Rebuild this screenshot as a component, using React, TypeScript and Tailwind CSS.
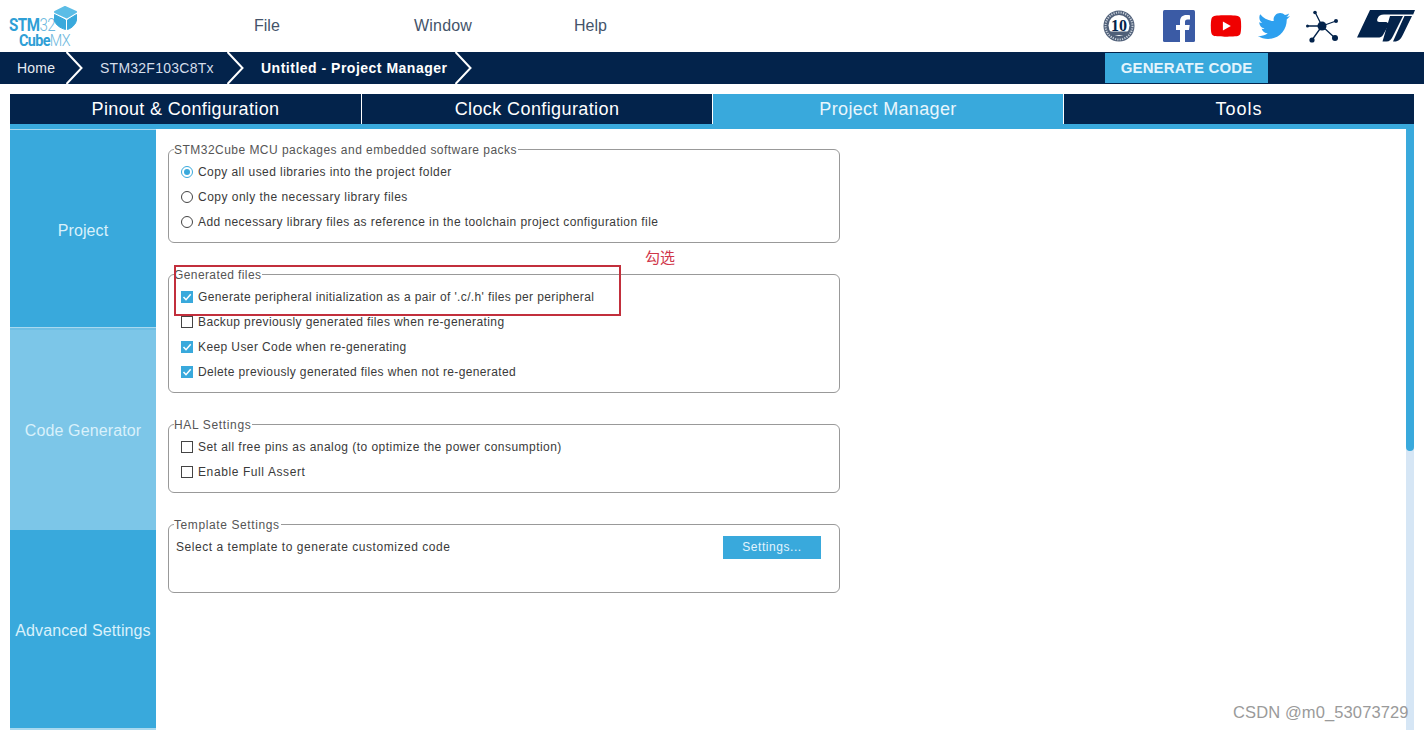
import React from "react";
import { FaYoutube, FaTwitter } from "react-icons/fa";

const sans = "font-['Liberation_Sans',Arial,sans-serif]";

function Cube() {
  return (
    <svg width="25" height="25" viewBox="0 0 25 25" strokeLinejoin="round">
      <path d="M2 6 L12 1 L23 6 L14 11.5 Z" fill="#5cbde6" stroke="#5cbde6" strokeWidth="2" />
      <path d="M1.5 8.5 L12.5 14 L12.5 23.5 C7 22 3 19 1.5 15 Z" fill="#39a9dc" stroke="#39a9dc" />
      <path d="M23.5 8.5 L14.5 14 L14.5 23.5 C19 22 23 18 23.5 14 Z" fill="#39a9dc" stroke="#39a9dc" />
    </svg>
  );
}

function Badge() {
  return (
    <svg width="32" height="32" viewBox="0 0 32 32">
      <circle cx="16" cy="16" r="15.5" fill="#4f5f78" />
      <circle cx="16" cy="16" r="13.5" fill="none" stroke="#c8d0da" strokeDasharray="1.2 1.2" strokeWidth="2" />
      <circle cx="16" cy="15.5" r="10.5" fill="#fff" />
      <text x="16" y="20.5" textAnchor="middle" fontSize="16" fontWeight="700" fontFamily="Liberation Serif" fill="#03234b">10</text>
      <path d="M6 21.5 H26 L24 25 H8 Z" fill="#4f5f78" />
    </svg>
  );
}

function Facebook() {
  return (
    <svg width="32" height="32" viewBox="0 0 32 32">
      <rect width="32" height="32" rx="1.5" fill="#3b5ba5" />
      <path d="M22 32 V20 H26 L26.7 15 H22 V12 C22 10.5 22.5 9.6 24.5 9.6 H27 V5.2 C26.4 5.1 25 5 23.3 5 C19.7 5 17 7.2 17 11.4 V15 H13 V20 H17 V32 Z" fill="#fff" />
    </svg>
  );
}

function Network() {
  return (
    <svg width="33" height="33" viewBox="0 0 33 33" fill="#03234b" stroke="#03234b">
      <path d="M16 16 L9 2 M16 16 L30 11 M16 16 L29 28 M16 16 L6 30 M16 16 L1 16" strokeWidth="1.3" />
      <circle cx="16" cy="16" r="4.5" stroke="none" />
      <circle cx="9" cy="2.5" r="1.8" stroke="none" />
      <circle cx="30" cy="11" r="2" stroke="none" />
      <circle cx="29" cy="28" r="3" stroke="none" />
      <circle cx="6" cy="30" r="2.6" stroke="none" />
      <circle cx="1.5" cy="16" r="1.5" stroke="none" />
    </svg>
  );
}

function StLogo() {
  return (
    <svg width="58" height="32" viewBox="0 0 58 32">
      <path d="M13 0 H58 L56.2 4.5 H27 C23.5 4.5 21.5 6 20.5 8.5 C19.5 11 20.5 12 22.5 12 H28 C31 12 32 14 31 16 L26 25 C25 27 23 27.5 21 27.5 H0 Z" fill="#03234b" />
      <path d="M33 6 H46 L36 26 C34.5 29.5 32.5 31.5 29.5 31.5 H25.5 Z" fill="#03234b" />
      <path d="M47.5 6 H55 L46 24.5 C44 29 41.5 31.5 37.5 31.5 H36 Z" fill="#03234b" />
    </svg>
  );
}

function Chevron() {
  return (
    <svg width="18" height="32" viewBox="0 0 18 32" className="shrink-0">
      <path d="M0.5 0 L15.5 16 L0.5 32" fill="none" stroke="#fff" strokeWidth="2" />
    </svg>
  );
}

function Radio({ on, label, className }: { on?: boolean; label: string; className?: string }) {
  return (
    <div className="flex h-[25px] items-center">
      <span className={`flex h-[12px] w-[12px] items-center justify-center rounded-full border ${on ? "border-[#39a9dc]" : "border-[#444]"}`}>
        {on && <span className="h-[6px] w-[6px] rounded-full bg-[#39a9dc]" />}
      </span>
      <span className={`ml-[5px] ${className ?? ""}`}>{label}</span>
    </div>
  );
}

function Check({ on, label, className }: { on?: boolean; label: string; className?: string }) {
  return (
    <div className="flex h-[25px] items-center">
      {on ? (
        <svg width="12" height="12" viewBox="0 0 12 12">
          <rect width="12" height="12" fill="#39a9dc" />
          <path d="M2.5 6 L5 8.7 L9.7 3.3" fill="none" stroke="#fff" strokeWidth="1.5" />
        </svg>
      ) : (
        <span className="h-[12px] w-[12px] border border-[#444]" />
      )}
      <span className={`ml-[5px] ${className ?? ""}`}>{label}</span>
    </div>
  );
}

function Group({ title, height, className, legendClass, children }: { title: string; height: string; className?: string; legendClass?: string; children: React.ReactNode }) {
  return (
    <fieldset className={`w-[672px] rounded-[6px] border border-[#999] pl-[12px] pt-[2px] ${height} ${className ?? ""}`}>
      <legend className={`-ml-[7px] pr-[1px] pt-[2px] text-[12px] leading-[14px] text-[#555] ${legendClass ?? "tracking-[0.47px]"}`}>{title}</legend>
      {children}
    </fieldset>
  );
}

export default function App() {
  const tabs = [
    { label: "Pinout & Configuration", track: "tracking-[0.35px]" },
    { label: "Clock Configuration", track: "tracking-[0.4px]" },
    { label: "Project Manager", track: "tracking-[0.35px]" },
    { label: "Tools", track: "tracking-[1px]" },
  ];
  return (
    <div className={`relative h-[730px] w-[1424px] overflow-hidden bg-white ${sans}`}>
      <header className="flex h-[52px] items-center bg-white">
        <div className="relative h-[52px] w-[254px] shrink-0">
          <div className="absolute left-[9px] top-[18px] origin-left scale-x-[0.84] font-['Roboto',sans-serif] text-[18px] leading-[14px] tracking-[-0.6px] text-[#2f9fd6]">
            <b>STM</b><span className="font-light text-[#6db8de]">32</span>
          </div>
          <div className="absolute left-[19px] top-[33px] origin-left scale-x-[0.9] font-['Roboto',sans-serif] text-[16px] leading-[15px] tracking-[-0.7px] text-[#6db8de]">
            <b className="text-[#2f9fd6]">Cube</b><span className="font-light">MX</span>
          </div>
          <div className="absolute left-[53px] top-[6px]"><Cube /></div>
        </div>
        <nav className="flex text-[16px] text-[#44546a]">
          <span className="w-[160px]">File</span>
          <span className="w-[160px] tracking-[0.2px]">Window</span>
          <span>Help</span>
        </nav>
        <div className="ml-auto flex items-center pr-[9px]">
          <span className="mr-[28px]"><Badge /></span>
          <span className="mr-[15px]"><Facebook /></span>
          <FaYoutube className="mr-[16px] h-[32px] w-[32px] text-[#f00000]" />
          <FaTwitter className="mr-[16px] h-[32px] w-[32px] text-[#2da0ef]" />
          <span className="mr-[18px]"><Network /></span>
          <StLogo />
        </div>
      </header>

      <div className="flex h-[32px] items-center bg-[#03234b] text-[14px] text-white">
        <span className="ml-[17px] w-[49px] tracking-[0.2px] text-[#e6ebf2]">Home</span>
        <Chevron />
        <span className="ml-[16px] w-[127px] tracking-[0.25px] text-[#d5deea]">STM32F103C8Tx</span>
        <Chevron />
        <span className="ml-[16px] w-[194px] font-bold tracking-[0.5px]">Untitled - Project Manager</span>
        <Chevron />
        <button className="ml-[632px] h-[30px] w-[163px] bg-[#39a9dc] text-[15px] font-bold tracking-[0.15px] text-[#e3f4fc]">
          GENERATE CODE
        </button>
      </div>

      <div className="mx-[10px] mt-[10px]">
        <div className="flex h-[30px]">
          {tabs.map((t, i) => (
            <div
              key={t.label}
              className={`flex w-[351px] items-center justify-center pt-[1px] text-[18px] ${t.track} ${i > 0 ? "border-l border-white" : ""} ${i === 2 ? "bg-[#39a9dc] text-[#e8f6fc]" : "bg-[#03234b] text-white"}`}
            >
              {t.label}
            </div>
          ))}
        </div>
        <div className="h-[5px] bg-[#39a9dc]" />
        <div className="h-[1px] w-[146px] bg-[#a9d9ef]" />
        <div className="flex h-[600px]">
          <aside className="flex w-[146px] shrink-0 flex-col text-[16px] tracking-[0.12px] text-[#d9f1fb]">
            <div className="flex h-[197px] items-center justify-center bg-[#39a9dc] pt-[4px]">Project</div>
            <div className="h-[1px] bg-[#a9d9ef]" />
            <div className="h-[2px] bg-[#6fbfe4]" />
            <div className="flex h-[200px] items-center justify-center bg-[#7cc6e8] pt-[2px]">Code Generator</div>
            <div className="flex h-[198px] items-center justify-center bg-[#39a9dc] pt-[4px]">Advanced Settings</div>
            <div className="h-[2px] bg-[#a9d9ef]" />
          </aside>
          <main className="flex-1 pl-[12px] pt-[11px] text-[12px] tracking-[0.43px] text-[#3a3a3a]">
            <Group title="STM32Cube MCU packages and embedded software packs" height="h-[102px]">
              <Radio on label="Copy all used libraries into the project folder" />
              <Radio label="Copy only the necessary library files" className="tracking-[0.48px]" />
              <Radio label="Add necessary library files as reference in the toolchain project configuration file" />
            </Group>
            <Group title="Generated files" height="h-[127px]" className="mt-[23px]" legendClass="tracking-[0.4px]">
              <Check on label="Generate peripheral initialization as a pair of '.c/.h' files per peripheral" className="tracking-[0.38px]" />
              <Check label="Backup previously generated files when re-generating" className="tracking-[0.39px]" />
              <Check on label="Keep User Code when re-generating" className="tracking-[0.4px]" />
              <Check on label="Delete previously generated files when not re-generated" className="tracking-[0.36px]" />
            </Group>
            <Group title="HAL Settings" height="h-[77px]" className="mt-[23px]" legendClass="tracking-[0.65px]">
              <Check label="Set all free pins as analog (to optimize the power consumption)" className="tracking-[0.46px]" />
              <Check label="Enable Full Assert" className="tracking-[0.6px]" />
            </Group>
            <Group title="Template Settings" height="h-[77px]" className="mt-[23px]" legendClass="tracking-[0.6px]">
              <div className="-ml-[5px] flex h-[25px] items-center justify-between pr-[18px]">
                <span className="tracking-[0.54px]">Select a template to generate customized code</span>
                <button className="mt-[1px] h-[23px] w-[98px] bg-[#39a9dc] pb-[1px] text-[12px] tracking-[0.55px] text-[#e3f4fc]">Settings...</button>
              </div>
            </Group>
          </main>
        </div>
      </div>

      {/* scrollbar over the content */}
      <div className="absolute left-[1406px] top-[124px] h-[606px] w-[8px] bg-[#d6e6f5]">
        <div className="h-[327px] rounded-b-[4px] bg-[#39a9dc]" />
      </div>

      {/* annotation drawn on the screenshot */}
      <div className="absolute left-[174px] top-[265px] h-[51px] w-[447px] border-2 border-[#c22f3c]" />
      <div className="absolute left-[645px] top-[248px] font-['Noto_Sans_CJK_SC',sans-serif] text-[15px] leading-[18px] text-[#d0364a]">勾选</div>

      {/* watermark */}
      <div className="absolute left-[1233px] top-[703px] text-[16.5px] leading-[18px] tracking-[0.12px] text-[#9a9a9a]">CSDN @m0_53073729</div>
    </div>
  );
}
